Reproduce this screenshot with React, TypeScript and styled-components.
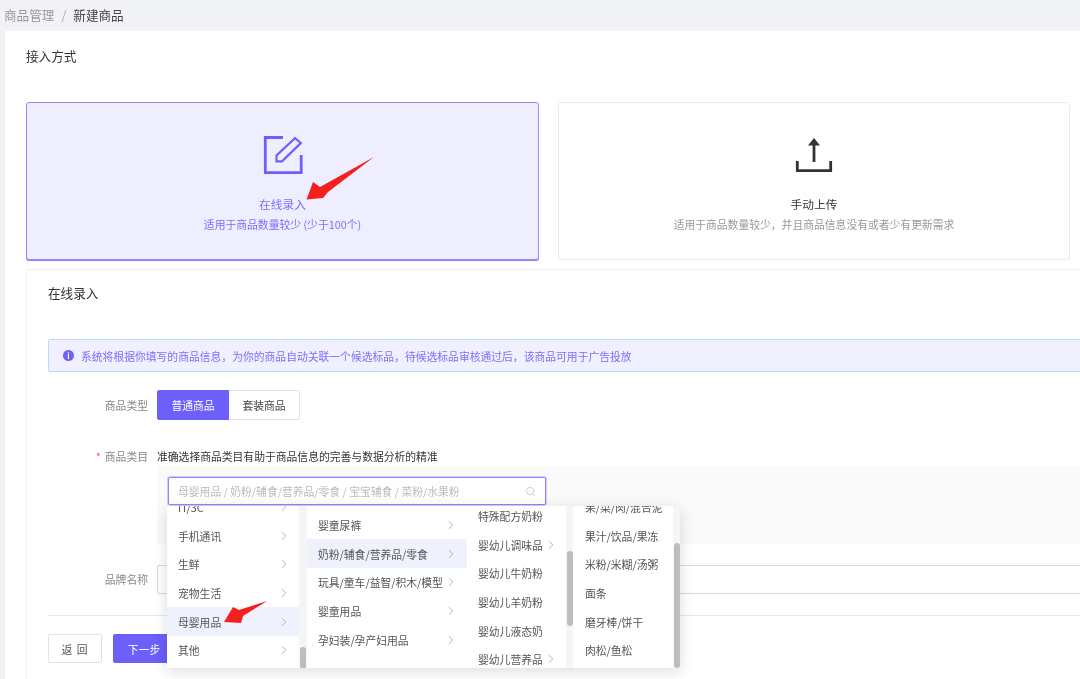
import React from "react";
import styled, { createGlobalStyle } from "styled-components";
import { ChevronRight, Search } from "lucide-react";

const FONT = `"Noto Sans CJK SC", "Noto Sans", "Liberation Sans", sans-serif`;
const PRIMARY = "#6c5ffa";

const Global = createGlobalStyle`
  html, body { margin: 0; padding: 0; background: #f0f2f5; }
  * { box-sizing: border-box; }
  body { font-family: ${FONT}; }
`;

const Page = styled.div`
  position: relative;
  width: 1080px;
  height: 679px;
  overflow: hidden;
  background: #f0f2f5;
  color: #333;
  font-size: 10.8px;
  filter: blur(0.3px);
`;

const Breadcrumb = styled.nav`
  display: flex;
  align-items: center;
  gap: 6px;
  height: 31px;
  padding: 0 0 2px 4px;
  font-size: 12.6px;
  color: #999;
`;

const Current = styled.span`
  color: #444;
`;

const Sep = styled.span`
  color: #aaa;
  margin: 0 1px;
`;

const Main = styled.main`
  height: 648px;
  margin-left: 5px;
  padding: 0 0 0 21px;
  background: #fff;
  overflow: hidden;
`;

const SectionTitle = styled.h2`
  margin: 0;
  height: 71px;
  padding-top: 15px;
  font-size: 12.6px;
  line-height: 20px;
  font-weight: 400;
  color: #333;
`;

const Cards = styled.div`
  display: flex;
  gap: 19px;
`;

const Card = styled.div<{ $active?: boolean }>`
  display: flex;
  flex-direction: column;
  align-items: center;
  height: 158px;
  padding-top: 33px;
  border-radius: 3px;
  background: ${(p) => (p.$active ? "#eeeefe" : "#fff")};
  border: 1px solid ${(p) => (p.$active ? "#958cfc" : "#ececec")};
  box-shadow: ${(p) => (p.$active ? "0 1px 0 #8a80fb" : "none")};
  width: ${(p) => (p.$active ? "513px" : "512px")};
  flex: none;
`;

const CardIcon = styled.svg`
  display: block;
  width: 42px;
  height: 42px;
`;

const CardTitle = styled.div<{ $active?: boolean }>`
  margin-top: 18px;
  font-size: 11.7px;
  line-height: 16px;
  color: ${(p) => (p.$active ? "#7c70fb" : "#333")};
`;

const CardDesc = styled.div<{ $active?: boolean }>`
  margin-top: 4px;
  font-size: 10.8px;
  line-height: 16px;
  color: ${(p) => (p.$active ? "#7c70fb" : "#999")};
`;

const Panel = styled.section`
  margin-top: 9px;
  width: 1100px;
  height: 420px;
  padding: 0 0 0 21px;
  border-top: 1px solid #eeeeee;
  border-left: 1px solid #f0f0f0;
`;

const PanelTitle = styled.h3`
  margin: 0;
  height: 69px;
  padding-top: 13px;
  font-size: 12.6px;
  line-height: 20px;
  font-weight: 400;
  color: #333;
`;

const Alert = styled.div`
  display: flex;
  align-items: center;
  gap: 7px;
  height: 33px;
  padding-left: 14px;
  background: #f0f0fe;
  border: 1px solid #b9dcfb;
  border-radius: 2px;
  color: #7c70fb;
  font-size: 10.8px;
`;

const InfoDot = styled.span`
  display: flex;
  align-items: center;
  justify-content: center;
  width: 11px;
  height: 11px;
  border-radius: 50%;
  background: ${PRIMARY};
  color: #fff;
  font-size: 8px;
  font-weight: 700;
  line-height: 1;
`;

const Row = styled.div<{ $top: number }>`
  display: grid;
  grid-template-columns: 100px 1fr;
  column-gap: 9px;
  margin-top: ${(p) => p.$top}px;
`;

const Label = styled.label<{ $lh: number }>`
  text-align: right;
  color: #888;
  font-size: 10.8px;
  line-height: ${(p) => p.$lh}px;
`;

const Star = styled.span`
  color: #f5584f;
  margin-right: 4px;
`;

const Segment = styled.div`
  display: flex;
`;

const SegButton = styled.button<{ $active?: boolean }>`
  width: ${(p) => (p.$active ? "72px" : "71px")};
  height: 30px;
  padding: 0;
  font: inherit;
  font-size: 10.8px;
  color: ${(p) => (p.$active ? "#fff" : "#444")};
  background: ${(p) => (p.$active ? PRIMARY : "#fff")};
  border: 1px solid ${(p) => (p.$active ? PRIMARY : "#e3e3e3")};
  border-left-width: ${(p) => (p.$active ? "1px" : "0")};
  border-radius: ${(p) => (p.$active ? "2px 0 0 2px" : "0 2px 2px 0")};
`;

const Hint = styled.div`
  height: 18px;
  line-height: 18px;
  color: #333;
  font-size: 10.8px;
`;

const PickerBox = styled.div`
  position: relative;
  height: 78px;
  margin-top: 1px;
  padding: 11px 0 0 11px;
  background: #fafafa;
`;

const SearchBox = styled.div`
  display: flex;
  align-items: center;
  justify-content: space-between;
  width: 378px;
  height: 28px;
  padding: 0 9px 0 9px;
  background: #fff;
  border: 1px solid #8f86fb;
  border-radius: 2px;
  box-shadow: 0 0 0 1px rgba(108, 95, 250, 0.28);
  color: #bbb;
  font-size: 10.8px;
`;

const Dropdown = styled.div`
  position: absolute;
  left: 10px;
  top: 40px;
  z-index: 5;
  display: flex;
  height: 162px;
  background: #fff;
  box-shadow: 0 3px 14px rgba(0, 0, 0, 0.14);
`;

const Column = styled.div<{ $w: number }>`
  display: flex;
  flex: none;
  width: ${(p) => p.$w}px;
  height: 100%;
  overflow: hidden;
`;

const List = styled.ul<{ $offset: number }>`
  flex: 1;
  min-width: 0;
  list-style: none;
  margin: ${(p) => p.$offset}px 0 0;
  padding: 0;
`;

const Item = styled.li<{ $active?: boolean; $left?: number; $right?: number }>`
  display: flex;
  align-items: center;
  justify-content: space-between;
  height: 28.7px;
  padding: 0 ${(p) => p.$right ?? 9}px 0 ${(p) => p.$left ?? 11}px;
  font-size: 10.8px;
  white-space: nowrap;
  color: #555;
  background: ${(p) => (p.$active ? "#eff1fd" : "transparent")};
`;

const Track = styled.div<{ $w?: number }>`
  flex: none;
  width: ${(p) => p.$w ?? 7}px;
  height: 100%;
  background: #f5f5f5;
`;

const Thumb = styled.div<{ $top: number; $h: number }>`
  width: 6px;
  height: ${(p) => p.$h}px;
  margin: ${(p) => p.$top}px 0 0 0.5px;
  border-radius: 3px;
  background: #bdbdbd;
`;

const BrandInput = styled.div`
  height: 29px;
  background: #fff;
  border: 1px solid #d9d9d9;
  border-radius: 2px;
`;

const Divider = styled.hr`
  margin: 21px 0 18px;
  border: 0;
  border-top: 1px solid #e8e8e8;
`;

const Actions = styled.div`
  display: flex;
  gap: 11px;
`;

const BackButton = styled.button`
  width: 54px;
  height: 29px;
  padding: 0;
  font: inherit;
  font-size: 10.8px;
  letter-spacing: 1px;
  color: #555;
  background: #fff;
  border: 1px solid #e3e3e3;
  border-radius: 2px;
`;

const NextButton = styled.button`
  width: 62px;
  height: 29px;
  padding: 0;
  font: inherit;
  font-size: 10.8px;
  color: #fff;
  background: ${PRIMARY};
  border: 0;
  border-radius: 2px;
`;

const Arrow = styled.svg`
  position: absolute;
  left: 0;
  top: 0;
  z-index: 10;
  width: 1080px;
  height: 679px;
  pointer-events: none;
`;

type Entry = { t: string; more?: boolean; active?: boolean };

const col1: Entry[] = [
  { t: "IT/3C", more: true },
  { t: "手机通讯", more: true },
  { t: "生鲜", more: true },
  { t: "宠物生活", more: true },
  { t: "母婴用品", more: true, active: true },
  { t: "其他", more: true },
];
const col2: Entry[] = [
  { t: "婴童尿裤", more: true },
  { t: "奶粉/辅食/营养品/零食", more: true, active: true },
  { t: "玩具/童车/益智/积木/模型", more: true },
  { t: "婴童用品", more: true },
  { t: "孕妇装/孕产妇用品", more: true },
];
const col3: Entry[] = [
  { t: "特殊配方奶粉" },
  { t: "婴幼儿调味品", more: true },
  { t: "婴幼儿牛奶粉" },
  { t: "婴幼儿羊奶粉" },
  { t: "婴幼儿液态奶" },
  { t: "婴幼儿营养品", more: true },
];
const col4: Entry[] = [
  { t: "果/菜/肉/混合泥" },
  { t: "果汁/饮品/果冻" },
  { t: "米粉/米糊/汤粥" },
  { t: "面条" },
  { t: "磨牙棒/饼干" },
  { t: "肉松/鱼松" },
];

const Entries = ({
  items,
  offset,
  left,
  right,
}: {
  items: Entry[];
  offset: number;
  left?: number;
  right?: number;
}) => (
  <List $offset={offset}>
    {items.map((e) => (
      <Item key={e.t} $active={e.active} $left={left} $right={right}>
        <span>{e.t}</span>
        {e.more && <ChevronRight size={14} strokeWidth={1} color="#808080" />}
      </Item>
    ))}
  </List>
);

export default function App() {
  return (
    <Page>
      <Global />
      <Breadcrumb>
        <span>商品管理</span>
        <Sep>/</Sep>
        <Current>新建商品</Current>
      </Breadcrumb>
      <Main>
        <SectionTitle>接入方式</SectionTitle>
        <Cards>
          <Card $active>
            <CardIcon viewBox="0 0 42 42" fill="none" stroke={PRIMARY}>
              <path d="M21 1.5H3.3V36.7H39.2V19" strokeWidth="2.8" />
              <path d="M14.5 25.3V19.5L33 2.2L38.8 7L20 25.3Z" strokeWidth="2.2" />
            </CardIcon>
            <CardTitle $active>在线录入</CardTitle>
            <CardDesc $active>适用于商品数量较少 (少于100个)</CardDesc>
          </Card>
          <Card>
            <CardIcon viewBox="0 0 42 42" fill="none" stroke="#333" strokeWidth="2.8">
              <path d="M21 26V7" />
              <path d="M21 2L27 9.5H15Z" fill="#333" stroke="none" />
              <path d="M4.3 25V34.7H37.7V25" />
            </CardIcon>
            <CardTitle>手动上传</CardTitle>
            <CardDesc>适用于商品数量较少，并且商品信息没有或者少有更新需求</CardDesc>
          </Card>
        </Cards>
        <Panel>
          <PanelTitle>在线录入</PanelTitle>
          <Alert>
            <InfoDot>i</InfoDot>
            系统将根据你填写的商品信息，为你的商品自动关联一个候选标品，待候选标品审核通过后，该商品可用于广告投放
          </Alert>
          <Row $top={18}>
            <Label $lh={30}>商品类型</Label>
            <Segment>
              <SegButton $active>普通商品</SegButton>
              <SegButton>套装商品</SegButton>
            </Segment>
          </Row>
          <Row $top={27}>
            <Label $lh={18}>
              <Star>*</Star>商品类目
            </Label>
            <div>
              <Hint>准确选择商品类目有助于商品信息的完善与数据分析的精准</Hint>
              <PickerBox>
                <SearchBox>
                  母婴用品 / 奶粉/辅食/营养品/零食 / 宝宝辅食 / 菜粉/水果粉
                  <Search size={11} color="#bbb" strokeWidth={1.5} />
                </SearchBox>
                <Dropdown>
                  <Column $w={140}>
                    <Entries items={col1} offset={-13.5} right={8} />
                    <Track $w={8}>
                      <Thumb $top={141} $h={22} />
                    </Track>
                  </Column>
                  <Column $w={160}>
                    <Entries items={col2} offset={4.6} />
                  </Column>
                  <Column $w={106}>
                    <Entries items={col3} offset={-4.4} right={8} />
                    <Track>
                      <Thumb $top={45} $h={75} />
                    </Track>
                  </Column>
                  <Column $w={107}>
                    <Entries items={col4} offset={-13.4} left={12} />
                    <Track>
                      <Thumb $top={37} $h={125} />
                    </Track>
                  </Column>
                </Dropdown>
              </PickerBox>
            </div>
          </Row>
          <Row $top={21}>
            <Label $lh={29}>品牌名称</Label>
            <BrandInput />
          </Row>
          <Divider />
          <Actions>
            <BackButton>返 回</BackButton>
            <NextButton>下一步</NextButton>
          </Actions>
        </Panel>
      </Main>
      <Arrow viewBox="0 0 1080 679">
        <path d="M306.5 199.5L313 182L320 187L374 157L328 192L323 198Z" fill="#f5201c" />
        <path d="M224 622L233 607L239 610L267 601L243 616L241 623Z" fill="#f5201c" />
      </Arrow>
    </Page>
  );
}
